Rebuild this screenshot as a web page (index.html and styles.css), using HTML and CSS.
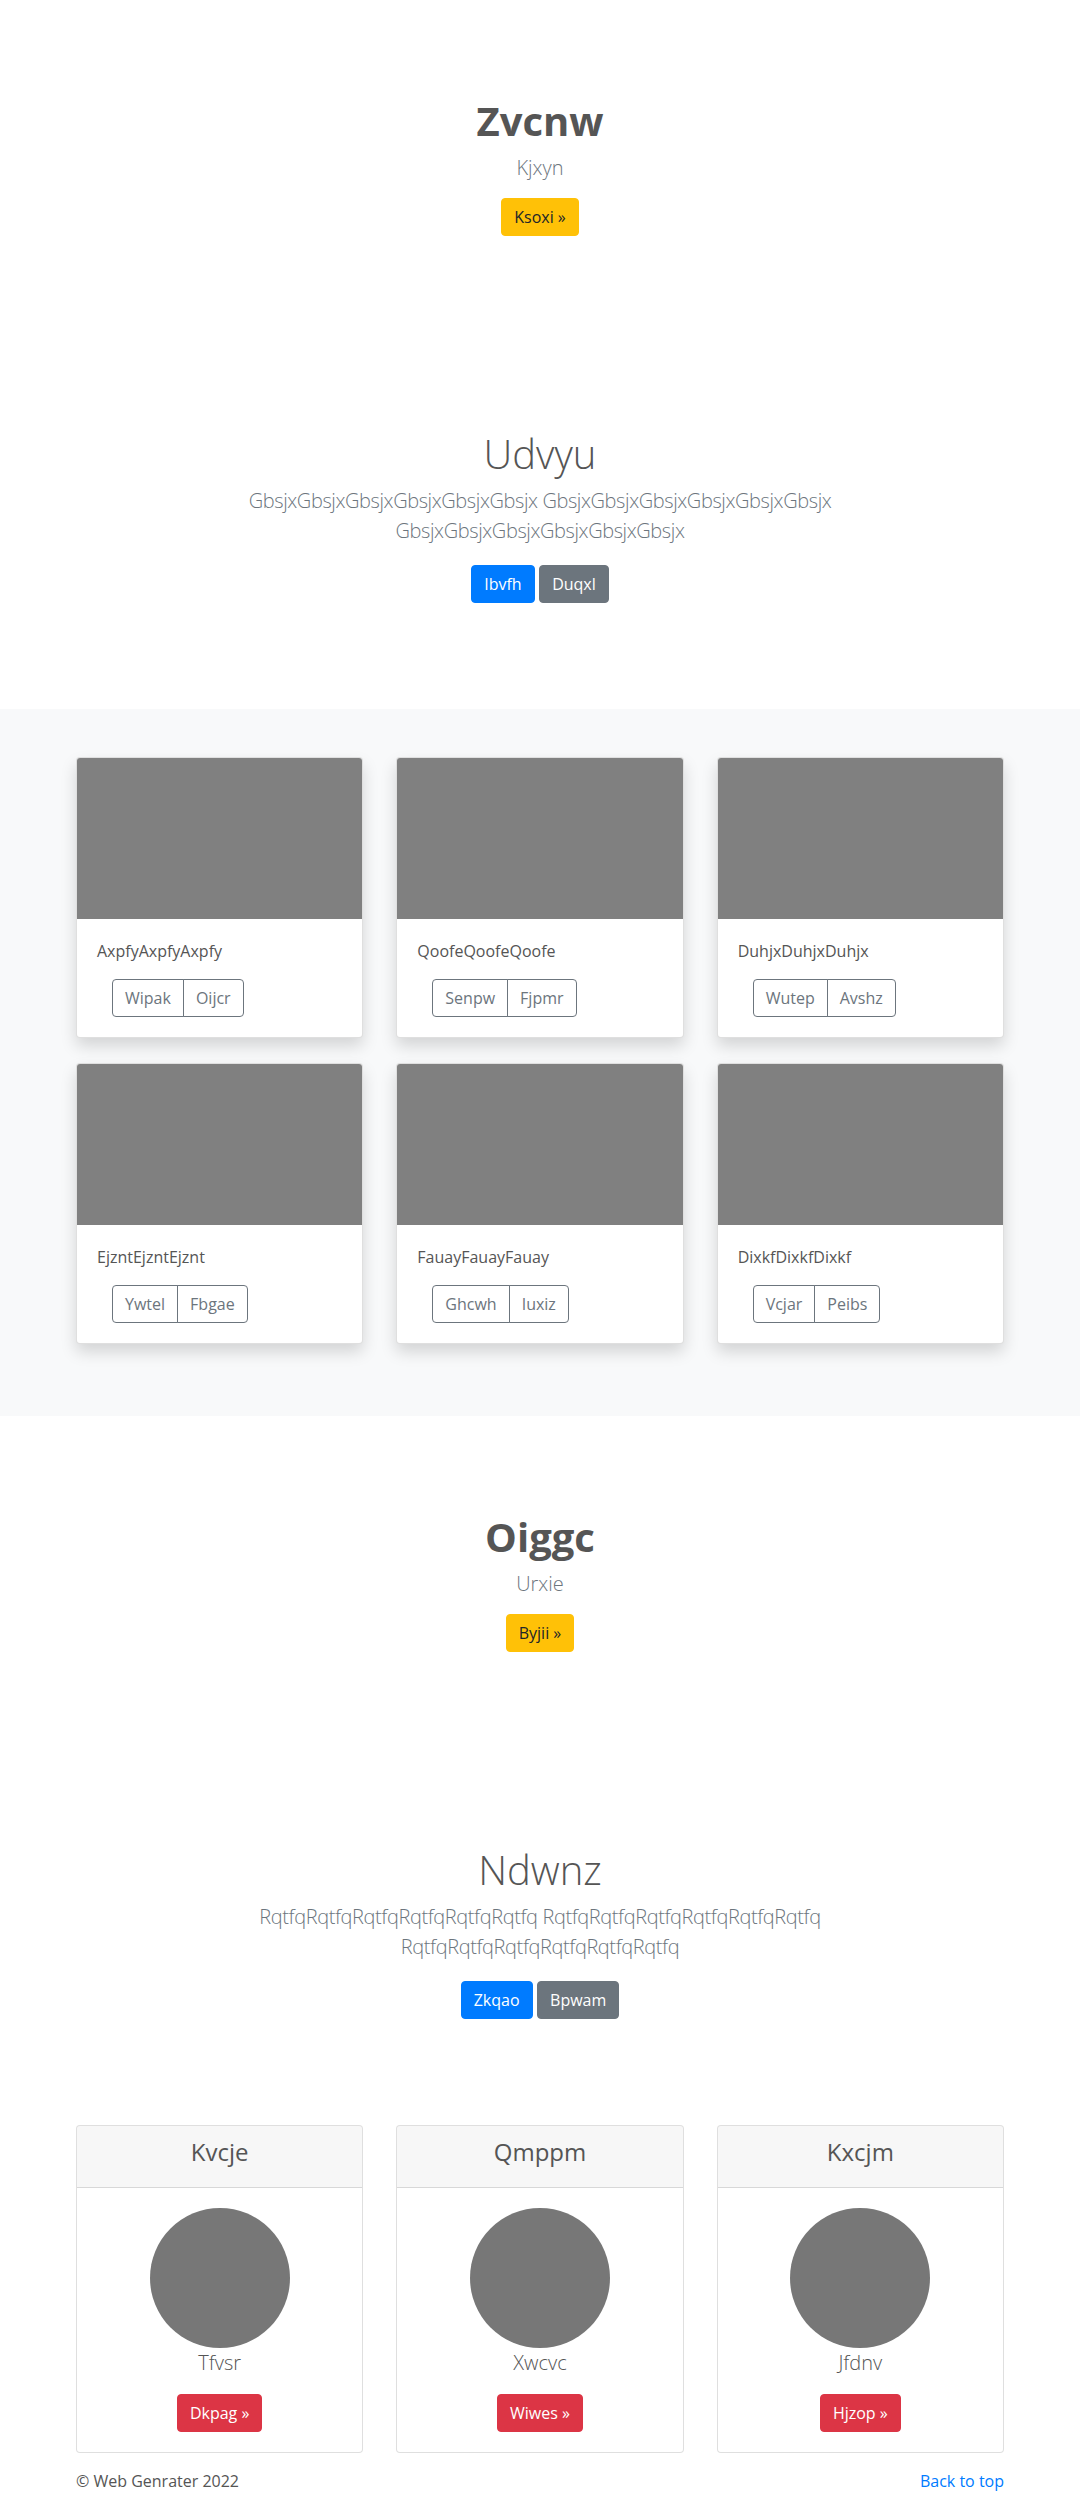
FILE: index.html
```html
<!DOCTYPE html>
<html lang="en">
<head>
<meta charset="utf-8">
<title>Web Genrater</title>
<link rel="stylesheet" href="styles.css">
</head>
<body>
<section class="hero">
  <h1 class="hero-title">Zvcnw</h1>
  <p class="hero-sub">Kjxyn</p>
  <div class="actions"><a class="btn btn-warning" href="#">Ksoxi »</a></div>
</section>

<section class="intro">
  <div class="intro-inner">
    <h1 class="intro-title">Udvyu</h1>
    <p class="intro-lead">GbsjxGbsjxGbsjxGbsjxGbsjxGbsjx GbsjxGbsjxGbsjxGbsjxGbsjxGbsjx GbsjxGbsjxGbsjxGbsjxGbsjxGbsjx</p>
    <div class="actions actions-spaced"><a class="btn btn-primary" href="#">Ibvfh</a><a class="btn btn-secondary" href="#">Duqxl</a></div>
  </div>
</section>

<section class="album">
  <div class="grid">
    <div class="card shadow-card">
      <div class="thumb"></div>
      <div class="card-body">
        <p class="card-text">AxpfyAxpfyAxpfy</p>
        <div class="btn-group"><a class="btn btn-outline" href="#">Wipak</a><a class="btn btn-outline" href="#">Oijcr</a></div>
      </div>
    </div>
    <div class="card shadow-card">
      <div class="thumb"></div>
      <div class="card-body">
        <p class="card-text">QoofeQoofeQoofe</p>
        <div class="btn-group"><a class="btn btn-outline" href="#">Senpw</a><a class="btn btn-outline" href="#">Fjpmr</a></div>
      </div>
    </div>
    <div class="card shadow-card">
      <div class="thumb"></div>
      <div class="card-body">
        <p class="card-text">DuhjxDuhjxDuhjx</p>
        <div class="btn-group"><a class="btn btn-outline" href="#">Wutep</a><a class="btn btn-outline" href="#">Avshz</a></div>
      </div>
    </div>
    <div class="card shadow-card">
      <div class="thumb"></div>
      <div class="card-body">
        <p class="card-text">EjzntEjzntEjznt</p>
        <div class="btn-group"><a class="btn btn-outline" href="#">Ywtel</a><a class="btn btn-outline" href="#">Fbgae</a></div>
      </div>
    </div>
    <div class="card shadow-card">
      <div class="thumb"></div>
      <div class="card-body">
        <p class="card-text">FauayFauayFauay</p>
        <div class="btn-group"><a class="btn btn-outline" href="#">Ghcwh</a><a class="btn btn-outline" href="#">Iuxiz</a></div>
      </div>
    </div>
    <div class="card shadow-card">
      <div class="thumb"></div>
      <div class="card-body">
        <p class="card-text">DixkfDixkfDixkf</p>
        <div class="btn-group"><a class="btn btn-outline" href="#">Vcjar</a><a class="btn btn-outline" href="#">Peibs</a></div>
      </div>
    </div>
  </div>
</section>

<section class="hero">
  <h1 class="hero-title">Oiggc</h1>
  <p class="hero-sub">Urxie</p>
  <div class="actions"><a class="btn btn-warning" href="#">Byjii »</a></div>
</section>

<section class="intro">
  <div class="intro-inner">
    <h1 class="intro-title">Ndwnz</h1>
    <p class="intro-lead">RqtfqRqtfqRqtfqRqtfqRqtfqRqtfq RqtfqRqtfqRqtfqRqtfqRqtfqRqtfq RqtfqRqtfqRqtfqRqtfqRqtfqRqtfq</p>
    <div class="actions actions-spaced"><a class="btn btn-primary" href="#">Zkqao</a><a class="btn btn-secondary" href="#">Bpwam</a></div>
  </div>
</section>

<section class="pricing">
  <div class="grid">
    <div class="card">
      <div class="card-header"><h4 class="card-title">Kvcje</h4></div>
      <div class="card-body center">
        <div class="avatar"></div>
        <p class="person">Tfvsr</p>
        <a class="btn btn-danger" href="#">Dkpag »</a>
      </div>
    </div>
    <div class="card">
      <div class="card-header"><h4 class="card-title">Qmppm</h4></div>
      <div class="card-body center">
        <div class="avatar"></div>
        <p class="person">Xwcvc</p>
        <a class="btn btn-danger" href="#">Wiwes »</a>
      </div>
    </div>
    <div class="card">
      <div class="card-header"><h4 class="card-title">Kxcjm</h4></div>
      <div class="card-body center">
        <div class="avatar"></div>
        <p class="person">Jfdnv</p>
        <a class="btn btn-danger" href="#">Hjzop »</a>
      </div>
    </div>
  </div>
</section>

<footer class="footer">
  <span class="copy">© Web Genrater 2022</span>
  <a class="top-link" href="#">Back to top</a>
</footer>
</body>
</html>
```
FILE: styles.css
```css
* { box-sizing: border-box; }

body {
  margin: 0;
  font-family: "Open Sans", "Noto Sans", sans-serif;
  font-size: 16px;
  line-height: 1.5;
  color: #555;
  background: #fff;
}

h1, h4, p { margin: 0; }

.hero {
  padding: 97px 0 96px;
  text-align: center;
}

.hero-title {
  font-size: 40px;
  line-height: 1.2;
  font-weight: 700;
  color: #555;
  margin-bottom: 8px;
}

.hero-sub {
  font-size: 20px;
  line-height: 1.5;
  font-weight: 300;
  color: #6c757d;
  margin-bottom: 15px;
}

.actions {
  display: flex;
  justify-content: center;
  gap: 4.5px;
}

.actions-spaced { margin-top: 19px; }

.intro {
  padding: 98px 0 106px;
  text-align: center;
}

.intro-inner {
  max-width: 700px;
  margin: 0 auto;
}

.intro-title {
  font-size: 40px;
  line-height: 1.2;
  font-weight: 300;
  color: #555;
  margin-bottom: 8px;
}

.intro-lead {
  font-size: 20px;
  line-height: 1.5;
  font-weight: 300;
  color: #6c757d;
  letter-spacing: -0.4px;
  margin-bottom: 16px;
}

.btn {
  display: inline-block;
  font-size: 16px;
  line-height: 24px;
  padding: 6px 12px;
  border: 1px solid transparent;
  border-radius: 4px;
  text-decoration: none;
  white-space: nowrap;
}

.btn-warning { background: #ffc107; border-color: #ffc107; color: #212529; }
.btn-primary { background: #007bff; border-color: #007bff; color: #fff; }
.btn-secondary { background: #6c757d; border-color: #6c757d; color: #fff; }
.btn-danger { background: #dc3545; border-color: #dc3545; color: #fff; }
.btn-outline { background: transparent; border-color: #6c757d; color: #6c757d; }

.album {
  background: #f8f9fa;
  padding: 48px 0 72px;
}

.grid {
  width: 928px;
  margin: 0 auto;
  display: grid;
  grid-template-columns: repeat(3, 1fr);
  column-gap: 33px;
  row-gap: 25px;
}

.card {
  background: #fff;
  border: 1px solid rgba(0, 0, 0, 0.125);
  border-radius: 4px;
  overflow: hidden;
  display: flex;
  flex-direction: column;
}

.shadow-card {
  box-shadow: 0 8px 16px rgba(0, 0, 0, 0.15);
}

.thumb {
  height: 161px;
  background: #808080;
}

.card-body {
  padding: 20px;
}

.card-text {
  font-size: 16px;
  line-height: 24px;
  color: #555;
  margin-bottom: 16px;
}

.btn-group {
  display: flex;
  margin-left: 15px;
}

.btn-group .btn { border-radius: 0; }
.btn-group .btn + .btn { margin-left: -1px; }
.btn-group .btn:first-child { border-radius: 4px 0 0 4px; }
.btn-group .btn:last-child { border-radius: 0 4px 4px 0; }

.pricing {
  padding: 0;
}

.card-header {
  background: rgba(0, 0, 0, 0.03);
  border-bottom: 1px solid rgba(0, 0, 0, 0.125);
  padding: 12px 20px;
  text-align: center;
}

.card-title {
  font-size: 24px;
  line-height: 1.2;
  font-weight: 500;
  color: #555;
  margin-bottom: 8px;
}

.center { text-align: center; }

.avatar {
  width: 140px;
  height: 140px;
  border-radius: 50%;
  background: #777;
  margin: 0 auto;
}

.person {
  font-size: 20px;
  line-height: 30px;
  font-weight: 300;
  color: #555;
  margin-bottom: 16px;
}

.footer {
  width: 928px;
  margin: 0 auto;
  padding: 16px 0 24px;
  display: flex;
  justify-content: space-between;
  font-size: 16px;
  line-height: 24px;
}

.copy { color: #555; }
.top-link { color: #007bff; text-decoration: none; }
```
